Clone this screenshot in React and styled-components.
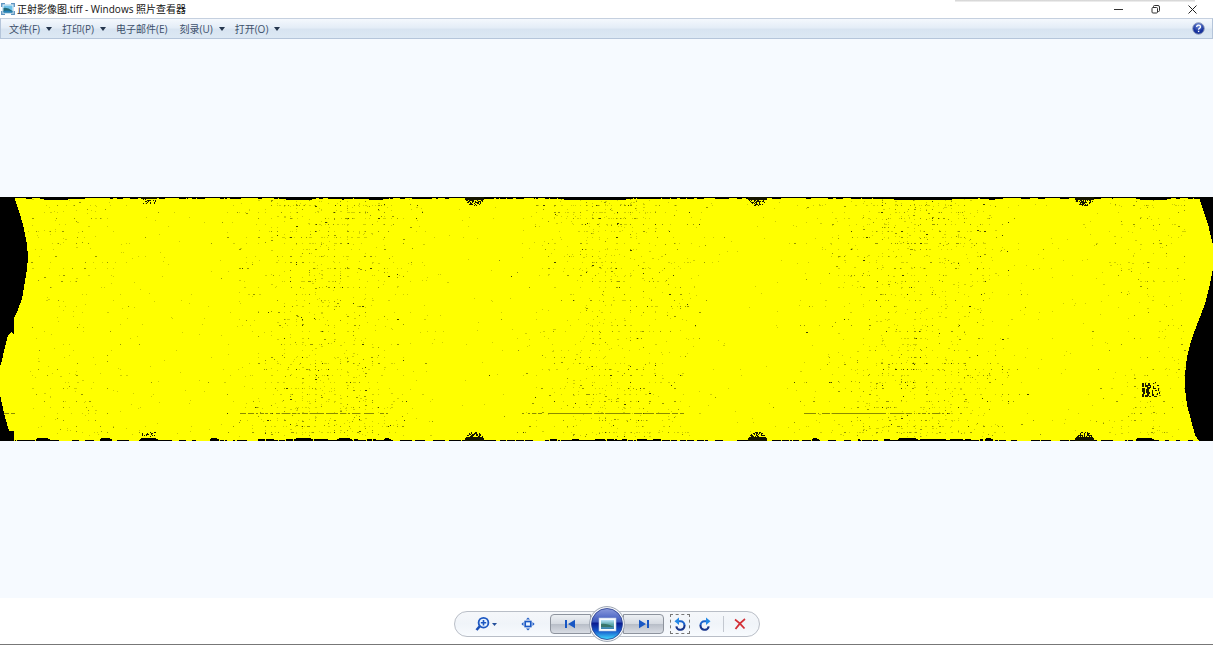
import React from "react";
import styled, { createGlobalStyle } from "styled-components";

const IMAGE_W = 1213;
const IMAGE_H = 244;

const menus = [
  { label: "文件(F)", arrow: true },
  { label: "打印(P)", arrow: true },
  { label: "电子邮件(E)", arrow: false },
  { label: "刻录(U)", arrow: true },
  { label: "打开(O)", arrow: true },
];

// small seeded generator so the speckles are the same on every render
const makeRandom = (seed) => () => {
  seed = (seed * 1664525 + 1013904223) % 4294967296;
  return seed / 4294967296;
};

const bell = (rand) => (rand() + rand() + rand() + rand() - 2) * 1.7;

const dot = (x, y, w = 1, h = 1) => `M${x} ${y}h${w}v${h}h${-w}z`;

const buildSpeckles = () => {
  const rand = makeRandom(77);
  const layers = { faint: "", mid: "", dark: "" };
  const clusters = [
    { x: 325, spread: 44, count: 1200 },
    { x: 610, spread: 42, count: 950 },
    { x: 915, spread: 50, count: 1300 },
    { x: 65, spread: 42, count: 300 },
    { x: 1160, spread: 36, count: 320 },
  ];
  clusters.forEach(({ x, spread, count }) => {
    for (let i = 0; i < count; i++) {
      let px = Math.round(x + bell(rand) * spread);
      let py = rand() * 238;
      if (rand() < 0.4) {
        const edge = Math.pow(rand(), 1.6) * 85;
        py = rand() < 0.5 ? edge : 240 - edge;
      }
      py = Math.round(py) + 3;
      // most of the gaps fall on the tile grid
      const snap = rand();
      if (snap < 0.58) py = Math.round(Math.round(py / 6.3) * 6.3) + 2;
      if (snap > 0.34 && snap < 0.84) px = Math.round(Math.round(px / 6.3) * 6.3);
      if (py > 239 || px < 28 || px > 1184) continue;
      const tone = rand();
      const key = tone < 0.66 ? "faint" : tone < 0.94 || count < 400 ? "mid" : "dark";
      layers[key] += dot(px, py, rand() < 0.2 ? 2 : 1);
    }
  });
  for (let i = 0; i < 550; i++) {
    layers.faint += dot(30 + Math.round(rand() * 1150), 4 + Math.round(rand() * 234));
  }
  return layers;
};

const buildEdges = () => {
  const rand = makeRandom(19);
  let d = dot(0, 0, IMAGE_W);
  let x = 12;
  while (x < 1200) {
    const w = 1 + Math.round(rand() * 7);
    const dense = [325, 610, 915].some((c) => Math.abs(c - x) < 68);
    if (rand() < (dense ? 0.88 : 0.45)) d += dot(x, 1, w);
    if (rand() < (dense ? 0.92 : 0.6)) {
      const h = dense && rand() < 0.5 ? 2 : 1;
      d += dot(x, IMAGE_H - h, w, h);
    }
    x += w + (rand() < 0.3 ? 1 : 0);
  }
  [[40, 32], [282, 34], [338, 10], [365, 22], [560, 70], [890, 66], [985, 14], [1136, 35]].forEach(
    ([sx, w]) => {
      d += dot(sx, 0, w, 2) + dot(sx + 4, 2, w - 8);
    }
  );
  [[36, 14], [100, 12], [140, 18], [210, 9], [295, 18], [338, 14], [384, 7], [812, 7], [898, 20], [985, 8], [1136, 18]].forEach(
    ([sx, w]) => {
      d += dot(sx, 242, w, 2) + dot(sx + 1, 241, w - 3);
    }
  );
  return d;
};

const buildScanLine = () => {
  const rand = makeRandom(5);
  let d = "";
  [[3, 14, 0.8], [240, 392, 0.6], [522, 548, 0.45], [548, 684, 0.85], [804, 834, 0.65], [834, 878, 1], [878, 950, 0.6]].forEach(
    ([from, to, fill]) => {
      for (let x = from; x < to; x += 2) {
        if (rand() < fill) d += dot(x, 216, 2);
      }
    }
  );
  return d;
};

const buildPatches = () => {
  const rand = makeRandom(42);
  let d = "";
  // round gaps cut into the upper and lower borders
  [474, 757, 1084].forEach((cx) => {
    for (let y = 0; y < 9; y++) {
      for (let x = -9; x <= 9; x++) {
        if (x * x + y * y * 1.15 > 86) continue;
        if (y < 3 || rand() < 0.54) d += dot(cx + x, y);
        if (y < 4 || rand() < 0.54) d += dot(cx + x, IMAGE_H - 1 - y);
      }
    }
  });
  d += dot(141, 0, 16, 2);
  for (let i = 0; i < 20; i++) {
    d += dot(142 + Math.round(rand() * 14), 2 + Math.round(rand() * 4));
    d += dot(141 + Math.round(rand() * 16), 234 + Math.round(rand() * 5));
  }
  return d;
};

const speckles = buildSpeckles();
const edges = buildEdges();
const scanLine = buildScanLine();
const patches = buildPatches();

const Orthophoto = () => (
  <Photo viewBox={`0 0 ${IMAGE_W} ${IMAGE_H}`} role="img" aria-label="正射影像图" shapeRendering="crispEdges">
    <rect width={IMAGE_W} height={IMAGE_H} fill="#ffff00" />
    <path d={speckles.faint} fill="#cfcf00" />
    <path d={speckles.mid} fill="#969600" />
    <path d={speckles.dark} fill="#444400" />
    <path d={scanLine} fill="#8c8c00" />
    <path d={edges} />
    <path d={patches} fill="#151500" />
    {/* damaged spot near the right end */}
    <path
      d="M1142 186h2v4h-2zM1145 186h1v2h2v-2h2v3h-2v1h2v2h-3v-2h-2zM1142 191h3v6h-1v3h-2v-3h1v-2h-1zM1146 192h3v3h1v2h-1v2h-2v-3h-1zM1145 198h3v2h-3zM1149 199h2v1h-2zM1150 188h1v3h-1zM1153 186h1v1h-1zM1155 185h1v1h-1zM1153 189h1v2h2v1h-3zM1157 188h2v1h-2zM1152 193h1v4h1v2h-2zM1155 193h2v1h-2zM1158 191h1v3h-1zM1157 196h1v2h-1zM1154 199h3v1h-3zM1159 195h1v2h-1z"
      fill="#1a1a00"
    />
    <path d="M0 0H14L20 17 24 32 27 48 28 60 27 72 25 84 22 102 17 115 14 121V137L11 135 8 138 5 150 2 163 0 170Z" />
    <path d="M0 197L2 207 5 220 9 234H14V244H0Z" />
    <path d="M1199 0L1203 13 1208 27 1211 40 1213 48V0Z" />
    <path d="M1213 71L1210 87 1205 107 1198 125 1191 144 1187 160 1185 177V192L1187 208 1191 223 1195 238 1199 244H1213Z" />
  </Photo>
);

const AppIcon = () => (
  <svg width="14" height="12" viewBox="0 0 14 12" aria-hidden="true">
    <rect x="1.5" y="1.5" width="11" height="9" fill="#eaf7fd" stroke="#b4d3e6" strokeWidth=".6" />
    <rect x="2.5" y="2.5" width="9" height="7" fill="#6ec2ea" />
    <path d="M2.5 5q4-1 9 3v1.5h-9z" fill="#246a76" />
    <path d="M2.5 8q4-1 9 .5v1h-9z" fill="#2583bd" />
    <path d="M.7 4V.7H4M10 .7h3.300V4M13.300 8v3.300H10M4 11.300H.7V8" fill="none" stroke="#5d94c0" strokeWidth="1.3" />
  </svg>
);

const HelpIcon = () => (
  <svg width="13" height="13" viewBox="0 0 13 13" aria-hidden="true">
    <defs>
      <radialGradient id="help" cy=".25">
        <stop offset="0" stopColor="#7996df" />
        <stop offset="1" stopColor="#17329d" />
      </radialGradient>
    </defs>
    <circle cx="6.5" cy="6.5" r="5.8" fill="url(#help)" stroke="#94a0bd" />
    <path d="M4.7 5q0-1.900 1.900-1.900T8.500 4.800q0 1-1 1.500-.9.500-.9 1.400" fill="none" stroke="#fff" strokeWidth="1.3" />
    <rect x="5.9" y="8.7" width="1.4" height="1.4" fill="#fff" />
  </svg>
);

const ZoomIcon = () => (
  <svg width="24" height="16" viewBox="0 0 24 16" fill="none" aria-hidden="true">
    <path d="M6 10L2.500 14" stroke="#1b4fb5" strokeWidth="2.6" />
    <circle cx="9.5" cy="6.7" r="4.9" fill="#e9f4ff" stroke="#1d58c2" strokeWidth="1.8" />
    <path d="M6.800 6.700h5.400M9.500 4v5.400" stroke="#1d58c2" strokeWidth="1.6" />
    <path d="M18 7h5l-2.500 3z" fill="#244f9b" />
  </svg>
);

const FitIcon = () => (
  <svg width="14" height="14" viewBox="0 0 14 14" aria-hidden="true">
    <rect x="4.2" y="4.5" width="5.6" height="5" fill="#eef6ff" stroke="#1b58c4" strokeWidth="1.7" />
    <path d="M5 2.500h4L7 .6zM5 11.500h4l-2 1.900zM2.500 5v4L.4 7zM11.500 5v4l2.100-2z" fill="#1b58c4" />
  </svg>
);

const PrevIcon = () => (
  <svg width="12" height="10" viewBox="0 0 12 10" fill="#1857c4" aria-hidden="true">
    <path d="M1 1h2v8H1zM11 .7v8.600L4 5z" />
  </svg>
);

const NextIcon = () => (
  <svg width="12" height="10" viewBox="0 0 12 10" fill="#1857c4" aria-hidden="true">
    <path d="M9 1h2v8H9zM1 .7v8.600L8 5z" />
  </svg>
);

const RotateIcon = ({ clockwise }) => (
  <svg width="14" height="14" viewBox="0 0 14 14" fill="none" aria-hidden="true">
    <g transform={clockwise ? "matrix(-1 0 0 1 14 0)" : undefined}>
      <path d="M5 4.300H7.500a3.900 3.900 0 0 1 3.900 3.900" stroke="#1b62cc" strokeWidth="2.1" />
      <path d="M11.400 8a4.100 4.100 0 0 1-8.100 1.400" stroke="#18358c" strokeWidth="2.1" />
      <path d="M6 .5v7.400L1.500 4.300z" fill="#2389e7" />
    </g>
  </svg>
);

const DeleteIcon = () => (
  <svg width="12" height="12" viewBox="0 0 12 12" fill="none" aria-hidden="true">
    <path d="M1 1.500q5 3.500 9.500 9M11 1Q5 5.500 1.500 11" stroke="#d32f36" strokeWidth="1.7" />
  </svg>
);

const SlideIcon = () => (
  <svg width="36" height="36" viewBox="0 0 36 36" aria-hidden="true">
    <defs>
      <linearGradient id="ball" x2="0" y2="1">
        <stop offset="0" stopColor="#8a9bdd" />
        <stop offset=".42" stopColor="#3b57bd" />
        <stop offset=".48" stopColor="#0a1c91" />
        <stop offset=".72" stopColor="#1556ca" />
        <stop offset="1" stopColor="#43dcff" />
      </linearGradient>
      <linearGradient id="scene" x2="0" y2="1">
        <stop offset="0" stopColor="#b9e4fa" />
        <stop offset=".5" stopColor="#5ba7aa" />
        <stop offset="1" stopColor="#3983b5" />
      </linearGradient>
    </defs>
    <circle cx="18" cy="18" r="17.4" fill="#f7f9fc" stroke="#9ba3b0" />
    <circle cx="18" cy="18" r="15.5" fill="url(#ball)" stroke="#263a8c" strokeWidth=".8" />
    <rect x="10" y="12" width="17" height="13" fill="#f7fbff" stroke="#bac8dc" strokeWidth=".6" />
    <rect x="12" y="14" width="13" height="9" fill="url(#scene)" />
    <path d="M12 18q5-1 13 3h-13z" fill="#37766b" />
  </svg>
);

const App = () => (
  <>
    <GlobalStyle />
    <Viewer>
      <TitleBar>
        <AppIcon />
        <Title>正射影像图.tiff - Windows 照片查看器</Title>
        <WindowButton aria-label="最小化">
          <svg width="9" height="9" viewBox="0 0 9 9"><path d="M0 4.500h9" stroke="#333" /></svg>
        </WindowButton>
        <WindowButton aria-label="还原">
          <svg width="9" height="9" viewBox="0 0 9 9" fill="none" stroke="#333">
            <rect x="1" y="2.5" width="5.5" height="5.5" rx="1" />
            <path d="M2.500 2.500V1.500q0-1 1-1h3.500q1.500 0 1.500 1.500v3.500q0 1-1 1h-1" />
          </svg>
        </WindowButton>
        <WindowButton aria-label="关闭">
          <svg width="9" height="9" viewBox="0 0 9 9"><path d="M.5.5l8 8M8.500.5l-8 8" stroke="#222" /></svg>
        </WindowButton>
      </TitleBar>

      <MenuBar>
        {menus.map(({ label, arrow }) => (
          <MenuButton key={label} $arrow={arrow}>
            {label}
            {arrow && (
              <svg width="6" height="4" viewBox="0 0 6 4"><path d="M0 0h6L3 4z" fill="#25364d" /></svg>
            )}
          </MenuButton>
        ))}
        <HelpButton aria-label="帮助">
          <HelpIcon />
        </HelpButton>
      </MenuBar>

      <Stage>
        <Orthophoto />
      </Stage>

      <Footer>
        <Controls>
          <SideGroup>
            <ToolButton $width={36} aria-label="更改显示大小"><ZoomIcon /></ToolButton>
            <ToolButton $width={20} aria-label="按窗口大小显示"><FitIcon /></ToolButton>
          </SideGroup>
          <Playback>
            <StepButton $side="left" aria-label="上一个"><PrevIcon /></StepButton>
            <PlayButton aria-label="放映幻灯片"><SlideIcon /></PlayButton>
            <StepButton $side="right" aria-label="下一个"><NextIcon /></StepButton>
          </Playback>
          <EndGroup>
            <ToolButton $width={20} $focused aria-label="逆时针旋转"><RotateIcon /></ToolButton>
            <ToolButton $width={20} aria-label="顺时针旋转"><RotateIcon clockwise /></ToolButton>
            <Divider />
            <ToolButton $width={20} aria-label="删除"><DeleteIcon /></ToolButton>
          </EndGroup>
        </Controls>
      </Footer>
    </Viewer>
  </>
);

export default App;

const GlobalStyle = createGlobalStyle`
  * {
    box-sizing: border-box;
  }

  body {
    margin: 0;
    background: #fff;
    font-family: "Open Sans", "Noto Sans CJK SC", sans-serif;
  }

  button {
    padding: 0;
    border: 0;
    background: none;
    font: inherit;
    color: inherit;
  }

  svg {
    display: block;
    flex-shrink: 0;
  }
`;

const Viewer = styled.div`
  display: flex;
  flex-direction: column;
  height: 100vh;
  border-bottom: 1px solid #777;
`;

const TitleBar = styled.header`
  display: flex;
  align-items: center;
  height: 18px;
  padding-left: 1px;
  background: linear-gradient(#cfcfcf, #f4f4f4) right 18px top / 240px 2px no-repeat #fff;
`;

const Title = styled.h1`
  margin: 0 auto 0 2px;
  font-size: 10px;
  line-height: 18px;
  font-weight: 400;
  color: #111;
  white-space: nowrap;
`;

const WindowButton = styled.button`
  display: grid;
  place-items: center;
  width: 37px;
  height: 18px;

  &:last-child {
    margin-right: 2px;
  }
`;

const MenuBar = styled.nav`
  display: flex;
  align-items: center;
  height: 21px;
  padding: 0 7px 0 8px;
  border: 1px solid #b5c5da;
  border-top-color: #c5d0df;
  background: linear-gradient(#f4f8fd 0%, #e4edf7 45%, #d8e4f1 55%, #dce8f4 100%);
`;

const MenuButton = styled.button`
  display: flex;
  align-items: center;
  gap: 6px;
  height: 20px;
  margin-right: ${({ $arrow }) => ($arrow ? "10px" : "12px")};
  font-size: 10px;
  line-height: 20px;
  color: #3d506b;
  white-space: nowrap;
`;

const HelpButton = styled.button`
  margin-left: auto;
`;

const Stage = styled.main`
  display: flex;
  flex: 1;
  align-items: center;
  min-height: 0;
  background: #f6faff;
`;

const Photo = styled.svg`
  width: 100%;
  max-height: 100%;
`;

const Footer = styled.footer`
  display: flex;
  align-items: center;
  justify-content: center;
  height: 46px;
  padding-top: 5px;
  background: #fff;
`;

const Controls = styled.div`
  display: grid;
  grid-template-columns: 95px 114px 95px;
  grid-template-rows: 24px;
  align-items: center;
  border: 1px solid #b9bec7;
  border-radius: 13px;
  background: linear-gradient(#f5f7fa, #f0f4f9 50%, #f8fbfe);
`;

const SideGroup = styled.div`
  display: flex;
  align-items: center;
  gap: 14px;
  padding-left: 13px;
`;

const Playback = styled.div`
  display: flex;
  align-items: center;
`;

const StepButton = styled.button`
  display: flex;
  flex: 1;
  align-items: center;
  justify-content: ${({ $side }) => ($side === "left" ? "flex-start" : "flex-end")};
  height: 20px;
  padding: 0 13px;
  border: 1px solid #8d939d;
  border-radius: ${({ $side }) => ($side === "left" ? "4px 0 0 4px" : "0 4px 4px 0")};
  background: linear-gradient(#edf0f4, #d5dae1 48%, #b8bec8 52%, #d9dde4);
`;

const PlayButton = styled.button`
  z-index: 1;
  margin: 0 -2px;
  border-radius: 50%;
`;

const EndGroup = styled.div`
  display: flex;
  align-items: center;
  gap: 5px;
  padding-left: 6px;
`;

const ToolButton = styled.button`
  display: grid;
  place-items: center;
  width: ${({ $width }) => $width}px;
  height: 20px;
  border: 1px ${({ $focused }) => ($focused ? "dashed #777" : "solid transparent")};
`;

const Divider = styled.span`
  width: 1px;
  height: 16px;
  margin: 0 1px 0 3px;
  background: #c3c8d0;
`;
